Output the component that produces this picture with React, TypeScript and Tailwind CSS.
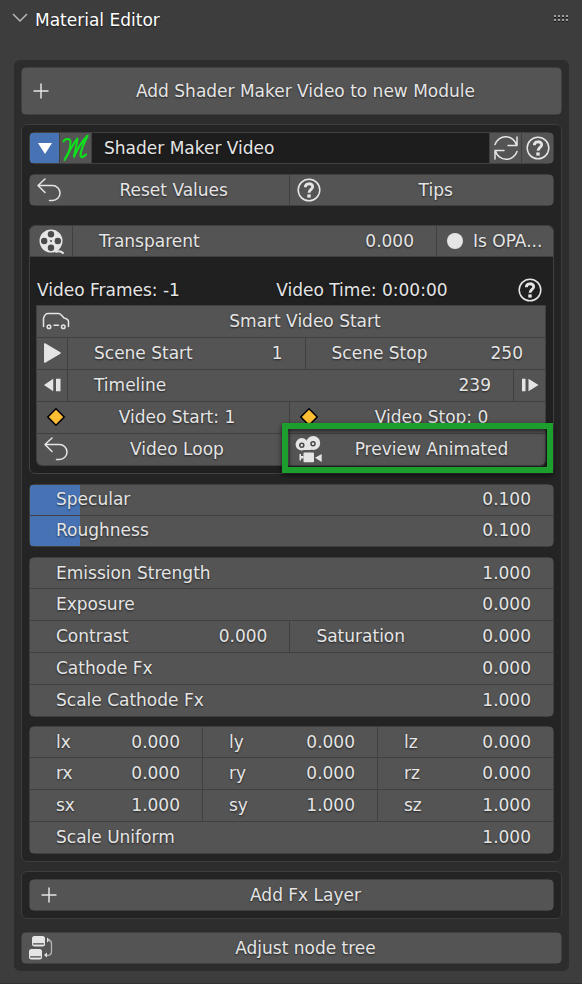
import type { ReactNode } from 'react';

const TEXT = 'text-[#e5e5e5] text-[17px] leading-6 [text-shadow:0_1px_2px_rgba(0,0,0,0.6)]';

function Icon({ children }: { children: ReactNode }) {
  return (
    <svg
      viewBox="0 0 24 24"
      className="h-6 w-6 shrink-0 overflow-visible"
      fill="none"
      stroke="#e5e5e5"
      strokeWidth="1.5"
      strokeLinecap="round"
      strokeLinejoin="round"
      aria-hidden="true"
    >
      {children}
    </svg>
  );
}

const PlusIcon = () => (
  <Icon>
    <path d="M12 4.500v15M4.500 12h15" strokeLinecap="butt" />
  </Icon>
);

const UndoIcon = () => (
  <Icon>
    <path d="M8 1L1 7.5L8 14.5M1 7.5H15.500a7.500 7.500 0 0 1 0 15H12.500" />
  </Icon>
);

const RefreshIcon = () => (
  <Icon>
    <path d="M1 8.500A11.200 11.200 0 0 1 22.500 9M23 1V9.500H14M23 15.500A11.200 11.200 0 0 1 1.500 15M1 23V14.500H10" />
  </Icon>
);

const HelpIcon = () => (
  <Icon>
    <circle cx="12" cy="12" r="10.800" />
    <path
      d="M8.300 9.200C8.300 4.700 15.700 4.700 15.700 8.800C15.700 11.400 12 11.400 12 14.800"
      strokeWidth="2.800"
      strokeLinecap="butt"
    />
    <rect x="10.300" y="16.400" width="3.400" height="3.200" fill="#e5e5e5" stroke="none" />
  </Icon>
);

const ReelIcon = () => (
  <Icon>
    <circle cx="12" cy="12" r="11.500" fill="#e5e5e5" stroke="none" />
    <g fill="#4a4a4a" stroke="none">
      <circle cx="12" cy="5.200" r="3.200" />
      <circle cx="12" cy="18.800" r="3.200" />
      <circle cx="5.200" cy="12" r="3.200" />
      <circle cx="18.800" cy="12" r="3.200" />
      <circle cx="12" cy="12" r="1" />
    </g>
    <path d="M17 22.800C19.500 21.800 22 22 24 24" strokeWidth="2" />
  </Icon>
);

const CarIcon = () => (
  <Icon>
    <path d="M-0.500 17.500V9.500C0.500 6 1.500 4.500 4 4.500H14.500C17 4.500 18 7 20 9C23 9.700 24.500 10.500 24.500 12.500V17.500M10 16.300H14.500" />
    <circle cx="5" cy="17.700" r="1.800" />
    <circle cx="19.300" cy="17.700" r="1.800" />
  </Icon>
);

const DiamondIcon = () => (
  <Icon>
    <path d="M12 3.800L20.200 12L12 20.200L3.800 12Z" fill="#ffbe33" stroke="#000" strokeLinejoin="miter" />
  </Icon>
);

const CameraIcon = () => (
  <Icon>
    <g fill="#e5e5e5" stroke="none">
      <circle cx="16.200" cy="6" r="7" />
      <circle cx="4.800" cy="7.300" r="6.200" />
      <path d="M3 10H14V13H3Z" />
      <rect x="6.500" y="15.500" width="10.500" height="9.700" rx="1" />
      <path d="M2.500 17H4V19H6.500V21.500H4V23.500H2.500ZM18 20.700L24.700 17V25Z" />
    </g>
    <g fill="#e5e5e5" stroke="#454545">
      <circle cx="16" cy="6.700" r="2" />
      <circle cx="4.800" cy="8.200" r="2" />
    </g>
  </Icon>
);

const NodesIcon = () => (
  <Icon>
    <g fill="#e5e5e5" stroke="none">
      <rect x="3" y="0" width="13" height="10.500" rx="2.500" />
      <rect x="0" y="13" width="13" height="10.500" rx="2.500" />
      <path d="M18 1.500L21 4L18 6.500ZM18 16.500L15 19L18 21.500Z" />
    </g>
    <path d="M4.500 7.800H14.500M1.500 20.800H11.500" stroke="#4a4a4a" strokeWidth="1.200" />
    <path
      d="M19.500 4C21.500 4.500 22.500 5.500 22.500 7.500V15.500C22.500 18.500 20.500 19.500 18 19.500"
      stroke="#b4b4b4"
      strokeWidth="1.300"
    />
  </Icon>
);

const ScriptLogo = () => (
  <svg
    viewBox="0 0 28 28"
    className="h-7 w-7"
    fill="none"
    stroke="#0fe01c"
    strokeLinecap="round"
    strokeLinejoin="round"
    aria-hidden="true"
  >
    <path d="M1.500 7.500C3 4 8.500 4 8.500 8C8.500 14 6 21 2.500 26" strokeWidth="2" />
    <path d="M3 25C7 18 11.500 9 15.500 4.500C15 10 13 17 12 22.500" strokeWidth="2" />
    <path d="M12 22.500C15.500 15 20 7 25.500 1.800C22 9 18.500 16 18.500 21.500C19 24.500 22 22.500 24 20.500" strokeWidth="2.200" />
  </svg>
);

function Group({ children }: { children: ReactNode }) {
  return <div className="flex flex-col gap-px overflow-hidden rounded-md bg-[#404040] p-px">{children}</div>;
}

function ActionButton({ icon, label, className }: { icon: ReactNode; label: string; className: string }) {
  return (
    <button type="button" className={`flex min-w-0 items-center bg-[#545454] ${TEXT} ${className}`}>
      <span className="flex w-7 shrink-0 pl-[7px]">{icon}</span>
      <span className="flex-1 truncate text-center">{label}</span>
    </button>
  );
}

function Field({ label, value, fill, className }: { label: string; value: string; fill?: number; className: string }) {
  return (
    <label className={`relative flex min-w-0 items-center bg-[#545454] pr-[22px] pl-[26px] ${TEXT} ${className}`}>
      {fill !== undefined && (
        <span className="absolute inset-y-0 left-0 bg-[#4772b3]" style={{ width: `${fill * 95}%` }} />
      )}
      <span className="relative shrink-0">{label}</span>
      <input
        type="text"
        defaultValue={value}
        className="relative w-0 min-w-0 flex-1 bg-transparent text-right outline-none [text-shadow:inherit]"
      />
    </label>
  );
}

function IconButton({ label, className, children }: { label: string; className: string; children: ReactNode }) {
  return (
    <button type="button" aria-label={label} className={`flex shrink-0 items-center justify-center ${className}`}>
      {children}
    </button>
  );
}

export default function App() {
  return (
    <main className="min-h-screen border-b border-[#303030] bg-[#3d3d3d] pb-3 font-['DejaVu_Sans',sans-serif]">
      <header className="flex h-[60px] items-start justify-between px-3 pt-2">
        <button type="button" className={`flex items-center gap-[7px] ${TEXT} text-white`}>
          <svg
            viewBox="0 0 16 10"
            className="mb-1 h-[10px] w-4"
            fill="none"
            stroke="#b8b8b8"
            strokeWidth="1.500"
            aria-hidden="true"
          >
            <path d="M1 1L8 8L15 1" />
          </svg>
          Material Editor
        </button>
        <svg viewBox="0 0 16 8" className="mt-[7px] h-2 w-4" aria-hidden="true">
          {[0, 4, 8, 12].map((x) => (
            <g key={x}>
              <path d={`M${x} 0h2v2h-2zM${x} 4h2v2h-2z`} fill="#a0a0a0" />
              <path d={`M${x} 2h2v1h-2zM${x} 6h2v1h-2z`} fill="#151515" />
            </g>
          ))}
        </svg>
      </header>

      <div className="mr-[13px] ml-3.5 rounded-md bg-[#2d2d2d] p-[7px]">
        <Group>
          <ActionButton icon={<PlusIcon />} label="Add Shader Maker Video to new Module" className="h-[46px] pb-px" />
        </Group>

        <section className="mt-[9px] rounded-md border border-[#3d3d3d] bg-[#242424] p-[7px]">
          <Group>
            <div className="flex h-[30px] gap-px">
              <IconButton label="Collapse" className="w-[29px] bg-[#4772b3]">
                <svg viewBox="0 0 14 11" className="h-[11px] w-[14px]" fill="#fff" aria-hidden="true">
                  <path d="M0 0H14L7 11Z" />
                </svg>
              </IconButton>
              <IconButton label="Shader Maker" className="w-[31px] bg-[#545454]">
                <ScriptLogo />
              </IconButton>
              <input
                type="text"
                aria-label="Module name"
                defaultValue="Shader Maker Video"
                className={`min-w-0 flex-1 bg-[#1d1d1d] px-3 outline-none ${TEXT}`}
              />
              <IconButton label="Refresh" className="w-[31px] bg-[#545454]">
                <RefreshIcon />
              </IconButton>
              <IconButton label="Help" className="w-[31px] bg-[#545454]">
                <HelpIcon />
              </IconButton>
            </div>
          </Group>

          <div className="mt-2.5">
            <Group>
              <div className="flex h-[30px] gap-px">
                <ActionButton icon={<UndoIcon />} label="Reset Values" className="w-[49.6%]" />
                <ActionButton icon={<HelpIcon />} label="Tips" className="flex-1" />
              </div>
            </Group>
          </div>

          <div className="mt-[19px] rounded-md border border-[#404040] bg-[#202020]">
            <div className="flex h-[31px] gap-px overflow-hidden rounded-t-[5px] border-b border-[#404040] bg-[#404040]">
              <IconButton label="Video source" className="w-[42px] bg-[#545454]">
                <ReelIcon />
              </IconButton>
              <Field label="Transparent" value="0.000" className="flex-1" />
              <button type="button" className={`flex w-[116px] items-center gap-2.5 bg-[#545454] pl-2.5 ${TEXT}`}>
                <span className="h-4 w-4 shrink-0 rounded-full bg-[#e5e5e5]" />
                Is OPA...
              </button>
            </div>

            <div className="pt-[17px] pr-[7px] pb-[7px] pl-1.5">
              <div className={`flex h-[31px] items-center pl-px ${TEXT}`}>
                <span className="w-[47%]">Video Frames: -1</span>
                <span className="flex-1">Video Time: 0:00:00</span>
                <IconButton label="Video help" className="w-8">
                  <HelpIcon />
                </IconButton>
              </div>

              <div className="flex flex-col gap-px rounded-b-md bg-[#404040] p-px">
                <ActionButton icon={<CarIcon />} label="Smart Video Start" className="h-[31px] pb-px" />
                <div className="flex h-[31px] gap-px">
                  <IconButton label="Play" className="w-[30px] bg-[#545454] pb-px">
                    <Icon>
                      <path d="M4.800 3L20 12L4.800 21Z" fill="#e5e5e5" />
                    </Icon>
                  </IconButton>
                  <div className="flex flex-1 gap-px">
                    <Field label="Scene Start" value="1" className="w-[49.6%] pb-px" />
                    <Field label="Scene Stop" value="250" className="flex-1 pb-px" />
                  </div>
                </div>
                <div className="flex h-[31px] gap-px">
                  <IconButton label="Previous frame" className="w-[30px] bg-[#545454] pb-px">
                    <Icon>
                      <path d="M13.200 5.800V18.200L4 12ZM16 5.800H20.500V18.200H16Z" fill="#e5e5e5" stroke="none" />
                    </Icon>
                  </IconButton>
                  <Field label="Timeline" value="239" className="flex-1 pb-px" />
                  <IconButton label="Next frame" className="w-[31px] bg-[#545454] pb-px">
                    <Icon>
                      <path d="M10.500 5.800V18.200L20.500 12ZM4 5.800H7.500V18.200H4Z" fill="#e5e5e5" stroke="none" />
                    </Icon>
                  </IconButton>
                </div>
                <div className="flex h-[31px] gap-px">
                  <ActionButton icon={<DiamondIcon />} label="Video Start: 1" className="w-[49.6%] pb-px" />
                  <ActionButton icon={<DiamondIcon />} label="Video Stop: 0" className="flex-1 pb-px" />
                </div>
                <div className="flex h-[31px] gap-px">
                  <ActionButton icon={<UndoIcon />} label="Video Loop" className="w-[49.6%] rounded-bl-[5px] pb-px" />
                  <div className="relative flex flex-1">
                    <ActionButton
                      icon={<CameraIcon />}
                      label="Preview Animated"
                      className="flex-1 rounded-br-[5px] pb-px"
                    />
                    <div className="pointer-events-none absolute -top-[11px] -right-2 -bottom-2 -left-2 border-[6px] border-[#1c9f2c] shadow-[0_2px_5px_rgba(0,0,0,0.7),inset_0_2px_5px_rgba(0,0,0,0.6)]" />
                  </div>
                </div>
              </div>
            </div>
          </div>

          <div className="mt-2.5">
            <Group>
              <Field label="Specular" value="0.100" fill={0.1} className="h-[30px] pb-0.5" />
              <Field label="Roughness" value="0.100" fill={0.1} className="h-[30px] pb-0.5" />
            </Group>
          </div>

          <div className="mt-2.5">
            <Group>
              <Field label="Emission Strength" value="1.000" className="h-[30px]" />
              <Field label="Exposure" value="0.000" className="h-[31px] pb-px" />
              <div className="flex h-[31px] gap-px">
                <Field label="Contrast" value="0.000" className="w-[49.6%] pb-px" />
                <Field label="Saturation" value="0.000" className="flex-1 pb-px" />
              </div>
              <Field label="Cathode Fx" value="0.000" className="h-[31px] pb-px" />
              <Field label="Scale Cathode Fx" value="1.000" className="h-[31px] pb-px" />
            </Group>
          </div>

          <div className="mt-[9px]">
            <Group>
              <div className="grid h-[30px] grid-cols-[172fr_174fr_175fr] gap-px">
                <Field label="lx" value="0.000" className="" />
                <Field label="ly" value="0.000" className="" />
                <Field label="lz" value="0.000" className="" />
              </div>
              <div className="grid h-[31px] grid-cols-[172fr_174fr_175fr] gap-px">
                <Field label="rx" value="0.000" className="pb-px" />
                <Field label="ry" value="0.000" className="pb-px" />
                <Field label="rz" value="0.000" className="pb-px" />
              </div>
              <div className="grid h-[31px] grid-cols-[172fr_174fr_175fr] gap-px">
                <Field label="sx" value="1.000" className="pb-px" />
                <Field label="sy" value="1.000" className="pb-px" />
                <Field label="sz" value="1.000" className="pb-px" />
              </div>
              <Field label="Scale Uniform" value="1.000" className="h-[31px] pb-px" />
            </Group>
          </div>
        </section>

        <section className="mt-[9px] rounded-md border border-[#3d3d3d] bg-[#242424] p-[7px]">
          <Group>
            <ActionButton icon={<PlusIcon />} label="Add Fx Layer" className="h-[30px]" />
          </Group>
        </section>

        <div className="mt-[13px]">
          <Group>
            <ActionButton icon={<NodesIcon />} label="Adjust node tree" className="h-[30px]" />
          </Group>
        </div>
      </div>
    </main>
  );
}
